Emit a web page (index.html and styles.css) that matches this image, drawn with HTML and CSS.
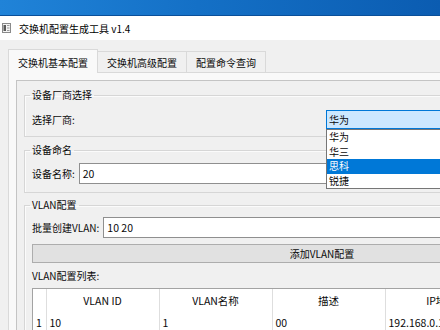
FILE: index.html
```html
<!DOCTYPE html>
<html lang="zh-CN">
<head>
<meta charset="utf-8">
<title>交换机配置生成工具 v1.4</title>
<link rel="stylesheet" href="styles.css">
</head>
<body>
<div class="desktop"></div>
<div class="titlebar">
  <svg class="app-icon" width="9" height="10" viewBox="0 0 9 10">
    <rect x="0.5" y="0.5" width="8" height="9" fill="#f4f4f4" stroke="#8a8a8a"/>
    <rect x="1.5" y="2" width="2.5" height="6" fill="#5a5a5a"/>
    <rect x="5" y="2" width="2.5" height="1" fill="#9a9a9a"/>
    <rect x="5" y="4.5" width="2.5" height="1" fill="#9a9a9a"/>
    <rect x="5" y="7" width="2.5" height="1" fill="#9a9a9a"/>
  </svg>
  <span class="title">交换机配置生成工具 v1.4</span>
</div>
<div class="window">
  <div class="tabs">
    <div class="tab active">交换机基本配置</div>
    <div class="tab">交换机高级配置</div>
    <div class="tab">配置命令查询</div>
  </div>
  <div class="pane">
    <div class="frame">
      <fieldset class="group g1">
        <legend>设备厂商选择</legend>
        <div class="row vendor-row">
          <span class="label">选择厂商:</span>
          <div class="combo">
            <span class="combo-value">华为</span>
            <ul class="combo-list">
              <li>华为</li>
              <li>华三</li>
              <li class="sel">思科</li>
              <li>锐捷</li>
            </ul>
          </div>
        </div>
      </fieldset>
      <fieldset class="group g2">
        <legend>设备命名</legend>
        <div class="row field-row">
          <span class="label">设备名称:</span>
          <div class="input">20</div>
        </div>
      </fieldset>
      <fieldset class="group g3">
        <legend>VLAN配置</legend>
        <div class="row field-row">
          <span class="label">批量创建VLAN:</span>
          <div class="input">10 20</div>
        </div>
        <div class="button">添加VLAN配置</div>
        <div class="list-label">VLAN配置列表:</div>
        <div class="table-wrap">
          <table class="grid">
            <colgroup>
              <col class="c-num"><col class="c-col"><col class="c-col"><col class="c-col"><col class="c-col">
            </colgroup>
            <thead>
              <tr><th></th><th>VLAN ID</th><th>VLAN名称</th><th>描述</th><th>IP地址</th></tr>
            </thead>
            <tbody>
              <tr><td class="num">1</td><td>10</td><td>1</td><td>00</td><td>192.168.0.1</td></tr>
            </tbody>
          </table>
        </div>
      </fieldset>
    </div>
  </div>
</div>
</body>
</html>
```
FILE: styles.css
```css
* { box-sizing: border-box; }

html, body {
  margin: 0;
  padding: 0;
}

body {
  width: 440px;
  height: 330px;
  overflow: hidden;
  background: #f0f0f0;
  color: #0a0a0a;
  font-family: "Noto Sans CJK SC", "Noto Sans", sans-serif;
  font-size: 10px;
}

.desktop {
  height: 16px;
  background: linear-gradient(90deg, #2083d8 0%, #1470c6 45%, #0b5cb1 100%);
  border-bottom: 1px solid #0a4f99;
}

.titlebar {
  height: 24px;
  background: #fff;
  display: flex;
  align-items: center;
  padding-left: 2px;
  gap: 8px;
  font-size: 10px;
  color: #000;
}

.app-icon { display: block; }

.window {
  padding: 9px 0 0 8px;
  width: 700px;
}

.tabs {
  display: flex;
  align-items: flex-end;
  height: 23px;
}

.tab {
  height: 21px;
  padding: 0 9px;
  margin-left: -1px;
  border: 1px solid #d9d9d9;
  border-bottom: none;
  background: #f0f0f0;
  display: flex;
  align-items: center;
  white-space: nowrap;
}

.tab.active {
  height: 24px;
  margin-left: 0;
  margin-bottom: -1px;
  background: #f9f9f9;
  position: relative;
  z-index: 1;
  padding-top: 1px;
}

.pane {
  width: 628px;
  height: 300px;
  border: 1px solid #d9d9d9;
  background: #f9f9f9;
  padding: 7px 7px 0 7px;
}

.frame {
  height: 300px;
  border: 1px solid #c4c4c4;
  background: #f0f0f0;
  padding: 7px 7px 0 7px;
}

.group {
  margin: 0;
  border: 1px solid #d6d6d6;
  box-shadow: inset 1px 1px 0 #fbfbfb;
  padding: 0 7px 7px 7px;
  min-width: 0;
}

.group legend {
  padding: 0 2px;
  margin-left: -2px;
  line-height: 14px;
  height: 14px;
}

.g1 { margin-bottom: 6px; }
.g2 { margin-bottom: 5px; padding-bottom: 8px; }

.row {
  display: flex;
  align-items: center;
}

.vendor-row {
  margin-top: 8px;
  height: 19px;
  justify-content: space-between;
}

.field-row {
  margin-top: 6px;
  height: 21px;
  gap: 4px;
}

.g3 .field-row { margin-top: 5px; }

.label { white-space: nowrap; }

.combo {
  position: relative;
  width: 286px;
  height: 19px;
  border: 1px solid #0078d7;
  background: #cce8ff;
  padding-left: 2px;
  display: flex;
  align-items: center;
}

.combo-list {
  position: absolute;
  top: 18px;
  left: -1px;
  width: 287px;
  margin: 0;
  padding: 0;
  list-style: none;
  background: #fff;
  border: 1px solid #767676;
  z-index: 5;
}

.combo-list li {
  height: 14.5px;
  line-height: 14.5px;
  padding-left: 2px;
}

.combo-list li.sel {
  background: #0078d7;
  color: #fff;
}

.input {
  flex: 1;
  height: 21px;
  border: 1px solid #8f8f8f;
  background: #fff;
  padding-left: 3px;
  display: flex;
  align-items: center;
  font-size: 10.5px;
}

.button {
  margin-top: 6px;
  height: 19px;
  border: 1px solid #adadad;
  background: #e1e1e1;
  display: flex;
  align-items: center;
  justify-content: center;
}

.list-label {
  margin-top: 6px;
  height: 14px;
  line-height: 14px;
}

.table-wrap {
  margin-top: 5px;
  background: #fff;
  border: 1px solid #a3a3a3;
  height: 120px;
  overflow: hidden;
}

.grid {
  width: 465px;
  table-layout: fixed;
  border-collapse: collapse;
  font-size: 10.5px;
}

.c-num { width: 13px; }
.c-col { width: 113px; }

.grid th {
  height: 22px;
  font-weight: normal;
  text-align: center;
  border-right: 1px solid #dedede;
  padding: 0;
  white-space: nowrap;
}

.grid td {
  height: 22px;
  padding: 0 3px;
  border-right: 1px solid #dedede;
  white-space: nowrap;
  overflow: hidden;
}

.grid td.num { padding: 0 0 0 3px; }
```
